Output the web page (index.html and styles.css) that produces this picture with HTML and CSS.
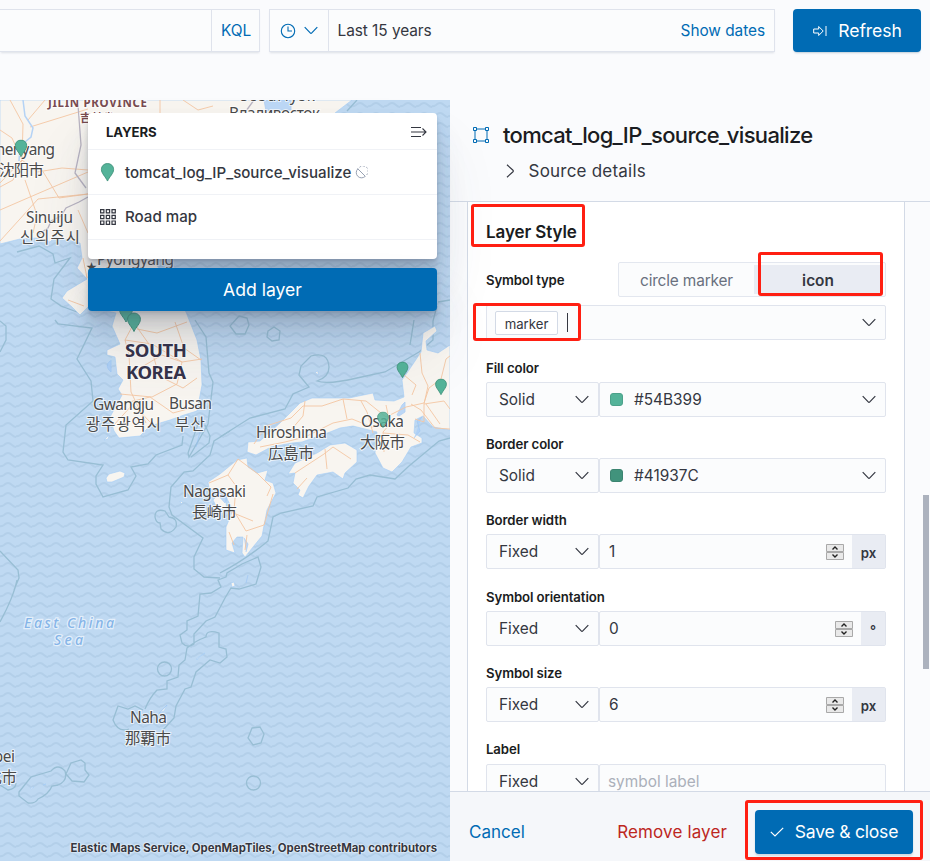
FILE: index.html
```html
<!DOCTYPE html>
<html lang="en">
<head>
<meta charset="utf-8">
<title>Maps</title>
<link rel="stylesheet" href="styles.css">
</head>
<body>
<svg width="0" height="0" class="defs">
  <symbol id="chev" viewBox="0 0 14 9"><path d="M.7 1.2 6.2 6.9q.8.8 1.6 0L13.3 1.2" fill="none" stroke="currentColor" stroke-width="1.2"/></symbol>
  <symbol id="pin" viewBox="0 0 14 20"><path d="M7 .6C3.300.6.6 3.300.6 6.800.6 11 5 14.500 7 19 9 14.500 13.400 11 13.400 6.800 13.400 3.300 10.700.6 7 .6Z" fill="#54b399" stroke="#41937c"/></symbol>
  <symbol id="spin" viewBox="0 0 18 16"><path d="M.5.5h17v7H.5zM.5 8.500h17v7H.5z" fill="#e9e9e9" stroke="#a9a9a9"/><path d="M6.500 5.500 9 3 11.500 5.500M6.500 10.500 9 13l2.500-2.500" fill="none" stroke="#222" stroke-width="1.400"/></symbol>
</svg>
<header class="topbar">
  <div class="query"><span class="kql">KQL</span></div>
  <div class="dates">
    <div class="quick">
      <svg class="clock" width="16" height="16" viewBox="0 0 16 16" fill="none" stroke="currentColor" stroke-width="1.100"><circle cx="8" cy="8" r="6.700"/><path d="M8 3.500V8h4"/></svg>
      <svg width="14" height="9"><use href="#chev"/></svg>
    </div>
    <span class="range">Last 15 years</span><a class="show">Show dates</a>
  </div>
  <button class="btn refresh"><svg width="14" height="12" viewBox="0 0 14 12" fill="none" stroke="currentColor"><path d="M.7 4h5V1.500L10.200 6l-4.500 4.500V8h-5zM13 1v10"/></svg><span>Refresh</span></button>
</header>
<main class="main">
  <section class="map">
    <svg class="canvas" width="450" height="761" viewBox="0 100 450 761">
      <defs><pattern id="wave" width="16" height="10" patternUnits="userSpaceOnUse"><path d="M-4 4q4 4 8 1 4-4 8 0 4 4 8 0" fill="none" stroke="#b3cfe9" stroke-width="1.800"/></pattern></defs>
      <rect y="100" width="450" height="761" fill="#bfd9f2"/>
      <rect y="100" width="450" height="761" fill="url(#wave)"/>
      <g class="bounds">
        <path d="M0 321l6 5v14l-6 12M0 551l18 19 1 8-5 12M17 580q-3 16-17 42M55 320l3 4 34 4-15 31 14 22 2 20-27 24-3 27 5 8 35 5-7 11v8l7 13 25-7 8-14-5-9 17-3 8-9 26-10 1-9"/>
        <path d="M195 320l11 17 3 36 4 9-5 42-19 33-1-4 11-32M205 425l5 11-1 7-18 14M0 254m17-2 22-6 14 8 2 9 15-5-16 21-3 20 10 7 16 6"/>
        <path d="M220 437l30-19 35-9 8-15 16-7-10-12 2-9 10-10q17-5 18 11 0 10-12 14 10 4 40-3l28-6 34-20 14-12v-19l4-15"/>
        <path d="M230 431l-16 10-4 14-17 16-9 1-13 15-2 20 3 8 31 23-9 19v12l10 8 16 1M220 573q25-13 48-32l5-24 8-4 32-7 4-9 31-9 8-9 14-4 25 4 14-13 30-25 11-3"/>
        <path d="M226 577l-8 3 3 7-10 6-11 1-2 22-11 5v9l-7 5 2 8q6 6 12 1v-10l12-13 9-4 10-19 6-10 8 1 17-5 5-17-3-10-16 7-15 9zM145 709q5-12 12-19l10-1v-8l11-4 1-12 6-5 2-12q8-7 19-11 0-8 13-4l0 14 7 2 1 8-7 6-10-3-14 12-5 15-6 2-9 17-2 12-11 12M143 710l-8-4-7 3-10-3-5 14q5 13 16 9"/>
        <circle cx="164.500" cy="669" r="7"/><circle cx="253.500" cy="783" r="7"/><path d="m252 728 8-1 4 7-3 9-8 2-5-7zM155 517q0-9 10-6l4 6q9 1 7 10-7 10-15 2l-1-6q-4 0-5-6M19 792l12-15 20-6q7-8 14 0 3 10-7 14l-6 1q-3 8-14 13-3 5-10 4l-9-7zM66 774l5-11 10-3 4 3v7l4 5-5 7-12-1z"/>
        <path d="m239 316 8 2 2 7-4 9-9 0-6-8zM268 331l6-4 6 4-1 9-7 1-5-4z"/><path d="M0 785l8 5q8-1 8-7M357 100 347 111M410 345l4-25M450 300l-12 2"/>
      </g>
      <g class="land">
        <path d="M0 100H352L335 113 300 155 155 240V262L186 312 197 340 201 360 202 385 197 411 184 415 170 420 150 426 140 436 119 438 114 431 110 417 122 395 118 389 123 380 117 374 115 357 107 355 107 350 120 344 112 326 116 313 88 307 80 315 72 307 62 298 67 291 87 279 77 268 82 258 80 243 55 237 50 242 37 238 20 239 0 244Z"/>
        <path d="M106 478 109 474 120 471 125 473 124 477 112 482 107 482ZM104 440l5-5-1 4z"/>
        <path d="M248 442 247 452 256 455 271 447 292 443 302 442 330 432 340 428 353 426 365 429 377 432 375 453 383 468 392 472 402 462 411 447 422 443V438L414 433 415 420 423 416 433 427 450 430V345L438 353 427 350 426 341 437 331 435 326 423 333 421 352 407 373 402 380 404 397 394 401 375 400 373 393 349 398 312 398 300 403 280 423 260 441Z"/>
        <path d="M288 474 295 463 317 453 330 445 345 443 357 450 357 462 345 473 343 479 333 472 317 475 309 486 303 498 298 495 300 490 293 483 295 473Z"/>
        <path d="M208 482 220 474 237 460 247 458 248 467 257 473 268 470 265 480 273 483 276 493 267 510 262 536 253 547 245 557 242 553 243 537 237 537 232 543 235 553 226 550 226 527 233 510 225 495 227 510 217 508 213 500 220 492 209 488Z"/>
        <path d="m315 372 3-1 0 4zM231 583l3-1 1 4-3 1zM197 658l8-5-7 5-1 2zM159 713l8-8-3 6zM30 788l4-1-2 2zM43 785l3-1zM180 501l3 1-2 2z"/>
      </g>
      <g class="shallow"><path d="M110 361q-6 5 1 11v-12M196 447l4-15M217 494l6-5 4 9-2 5zM244 538l4 6-2 8M414 438l6-7-3-10 5-4M397 415l5-10 3-3v10l-6 4zM156 717l11-12M246 583l2-8M264 100l27 0 0 10-25 1z"/></g>
      <g class="roads">
        <path d="M0 130l12 8 10 22 15 12 25-4 26 2M22 160 0 183M22 160l-9 20-13 7M25 180l12 35-4 18M42 170l17 28 29-4M10 100l13 24-1 36M30 127l58-18M0 210l30-13 58-25M45 100l-17 20M0 241l38-42 50-5M78 210l10 23M160 100v13M183 100l15 10 15-4M83 258l4 20M68 300l16 6"/>
        <path d="M134 323l-9 17 4 15 2 37 15 31M134 323l17 24 8 29 24 12 14-10M125 340l27 4 30 18 20-3M130 374l32-19 20 7-5 22-25 13-32-3M175 322l9 26 17 12M125 403l25-6 23 16 22-6M113 426l20-22 17 18M187 322l-30 11-20-4"/>
        <path d="M254 444l12-18 25-8 12-12 19 0 21-7 23 2 20 16 20-10 18-4 5-15 12-9 5-20 13-10M260 447l25-5 20-5 28-14 19-4 20 8 15-2M305 401l-2 15-12 14M343 399l4 20M361 401l6 11 6 21M386 405l4 19-7 8 1 20M404 375l12 10-4 10M420 353l2 20 6 13-4 18 20-3 6 8M383 433l25 2 12 7M424 404v18l-9-3M426 404l14 20M411 404l10 6 14 18 15 1"/>
        <path d="M295 473l29-19 9-7 18 12M325 449l2 20M297 489l10-11M209 483l19-8 10-16 20 15 13 13-4 9M228 475l8 11-2 25 12 20 18-6 9-31M231 512l22 9M229 532l5 13M247 535l-2 15"/>
      </g>
      <path class="border" d="M88 197l-9 5-13 6-5 8-10 5-3 7-9 6M78 105l3 40-6 28 11 15M254 100l-8 11"/>
      <path class="river" d="M23 100l2 16 8 12-2 9-11 9-1 15"/>
      <g class="labels">
        <text x="48" y="106.500" class="prov" textLength="99">JILIN PROVINCE</text><text x="80" y="122" class="prov">吉林省</text>
        <text x="238" y="101" textLength="77">Ussuriysk</text><text x="229" y="119" textLength="91">Владивосток</text>
        <text x="-12" y="154.500" textLength="67">Shenyang</text><text x="-1" y="175.500" textLength="45">沈阳市</text>
        <text x="26" y="222.500" textLength="47">Sinuiju</text><text x="20" y="243" textLength="60">신의주시</text>
        <text x="97" y="264.500" textLength="77">Pyongyang</text><text x="86" y="271" class="star">★</text>
        <g class="country"><text x="125" y="356.500" textLength="62">SOUTH</text><text x="126" y="378.500" textLength="60">KOREA</text></g>
        <text x="93" y="409.500" textLength="61">Gwangju</text><text x="86" y="430" textLength="75">광주광역시</text>
        <text x="169" y="409" textLength="43">Busan</text><text x="175" y="430" textLength="30">부산</text>
        <text x="256" y="437.500" textLength="71">Hiroshima</text><text x="268" y="459" textLength="46">広島市</text>
        <text x="361" y="426.500" textLength="43">Osaka</text><text x="360" y="448" textLength="45">大阪市</text>
        <text x="183" y="496.500" textLength="63">Nagasaki</text><text x="192" y="518" textLength="45">長崎市</text>
        <text x="130" y="722.500" textLength="37">Naha</text><text x="125" y="743.500" textLength="46">那覇市</text>
        <text x="-25" y="761.500" textLength="40">Taipei</text><text x="-29" y="782.500" textLength="46">台北市</text>
        <g class="sea"><text x="24" y="628" textLength="90">East China</text><text x="54" y="645" textLength="29">Sea</text></g>
      </g>
      <g class="pins"><use href="#pin" x="14.500" y="139.500" width="13" height="18"/><use href="#pin" x="119" y="303" width="14" height="20"/><use href="#pin" x="127" y="312" width="14" height="21"/><use href="#pin" x="396" y="361.500" width="13" height="17"/><use href="#pin" x="434.500" y="378.500" width="13" height="17"/><use href="#pin" x="376.500" y="411.500" width="13" height="17" opacity=".85"/></g>
    </svg>
    <div class="attribution">Elastic Maps Service, OpenMapTiles, OpenStreetMap contributors</div>
    <div class="control">
      <div class="layers">
        <div class="lhead"><b>LAYERS</b><svg width="16" height="12" viewBox="0 0 16 12" fill="none" stroke="#343741" stroke-width="1.100"><path d="M0 1.500h10M0 6h15M0 10.500h10M11.500 2.500 15 6l-3.500 3.500"/></svg></div>
        <div class="lrow"><svg width="15" height="19"><use href="#pin"/></svg><span class="src">tomcat_log_IP_source_visualize</span><svg class="off" width="13" height="13" viewBox="0 0 13 13" fill="none" stroke="#98a2b3"><path d="M2.500 2.500 10.500 10.500M3 2.700A5 5 0 0 0 10 10.500"/><path d="M4.500 1.300A5.200 5.200 0 0 1 11.500 9" stroke-dasharray="2 1.500"/></svg></div>
        <div class="lrow"><svg class="grid" width="16" height="16" viewBox="0 0 16 16" fill="none" stroke="#343741" stroke-width="1.200"><path d="M.6.6h3.300v3.300H.6zM6.300.6h3.300v3.300H6.300zM12 .6h3.300v3.300H12zM.6 6.300h3.300v3.300H.6zM6.300 6.300h3.300v3.300H6.300zM12 6.300h3.300v3.300H12zM.6 12h3.300v3.300H.6zM6.300 12h3.300v3.300H6.300zM12 12h3.300v3.300H12z"/></svg><span class="road">Road map</span></div>
      </div>
      <button class="btn add"><span>Add layer</span></button>
    </div>
  </section>
  <aside class="flyout">
    <div class="fhead">
      <div class="title"><svg width="16" height="16" viewBox="0 0 16 16" fill="none" stroke="#006bb4"><path d="M.5.500h3v3h-3zM12.500.5h3v3h-3zM.5 12.500h3v3h-3zM12.500 12.500h3v3h-3zM3.500 2h9M3.500 14h9M2 3.500v9M14 3.500v9"/></svg><h2><span>tomcat_log_IP_source_visualize</span></h2></div>
      <div class="details"><svg width="9" height="14" viewBox="0 0 9 14"><path d="M1 .8 7 6.300q.7.700 0 1.400L1 13.200" fill="none" stroke="#343741" stroke-width="1.200"/></svg><span>Source details</span></div>
    </div>
    <div class="fbody">
      <div class="card">
        <h3><span>Layer Style</span></h3>
        <div class="symtype"><label>Symbol type</label><div class="seg"><span class="circle">circle marker</span><b>icon</b></div></div>
        <div class="combo"><span class="pill">marker</span><i class="caret"></i><svg class="chev" width="14" height="9"><use href="#chev"/></svg></div>
        <div class="row"><label>Fill color</label><div class="ctl"><div class="sel">Solid<svg width="14" height="9"><use href="#chev"/></svg></div><div class="val"><i class="sw fill"></i>#54B399<svg class="chev" width="14" height="9"><use href="#chev"/></svg></div></div></div>
        <div class="row"><label>Border color</label><div class="ctl"><div class="sel">Solid<svg width="14" height="9"><use href="#chev"/></svg></div><div class="val"><i class="sw line"></i>#41937C<svg class="chev" width="14" height="9"><use href="#chev"/></svg></div></div></div>
        <div class="row tall"><label>Border width</label><div class="ctl"><div class="sel">Fixed<svg width="14" height="9"><use href="#chev"/></svg></div><div class="val num">1<svg class="spin" width="18" height="16"><use href="#spin"/></svg><b class="unit">px</b></div></div></div>
        <div class="row"><label>Symbol orientation</label><div class="ctl"><div class="sel">Fixed<svg width="14" height="9"><use href="#chev"/></svg></div><div class="val num">0<svg class="spin" width="18" height="16"><use href="#spin"/></svg><b class="unit deg">°</b></div></div></div>
        <div class="row"><label>Symbol size</label><div class="ctl"><div class="sel">Fixed<svg width="14" height="9"><use href="#chev"/></svg></div><div class="val num">6<svg class="spin" width="18" height="16"><use href="#spin"/></svg><b class="unit">px</b></div></div></div>
        <div class="row last"><label>Label</label><div class="ctl"><div class="sel">Fixed<svg width="14" height="9"><use href="#chev"/></svg></div><div class="val num ph">symbol label</div></div></div>
      </div>
    </div>
    <div class="ffoot"><a class="cancel">Cancel</a><a class="remove">Remove layer</a><button class="btn save"><svg width="14" height="10" viewBox="0 0 14 10"><path d="M.8 4.800 5 9 13.200.8" fill="none" stroke="currentColor" stroke-width="1.200"/></svg><span>Save &amp; close</span></button></div>
    <i class="thumb"></i>
  </aside>
</main>
<i class="mark m1"></i><i class="mark m2"></i><i class="mark m3"></i><i class="mark m4"></i>
</body>
</html>
```
FILE: styles.css
```css
* { box-sizing: border-box; }
body { margin: 0; width: 930px; height: 861px; overflow: hidden; position: relative; background: #fafbfd; color: #343741; font: 15.4px/20px Inter, "Noto Sans", sans-serif; }
svg { flex: none; display: block; }
.defs { position: absolute; }
.topbar { height: 100px; padding-top: 9px; display: flex; align-items: flex-start; }
.query, .dates { height: 43px; border: 1px solid #dfe3ec; background: #fbfcfd; box-shadow: 0 2px 2px -1px rgba(152,162,179,.3); display: flex; align-items: center; }
.query { width: 260px; border-left: 0; justify-content: flex-end; }
.kql { width: 48px; height: 41px; line-height: 42px; padding-left: 9px; border-left: 1px solid #dfe3ec; color: #006bb4; }
.dates { width: 506px; margin-left: 9px; }
.quick { width: 59px; height: 41px; border-right: 1px solid #dfe3ec; display: flex; align-items: center; gap: 8px; padding-left: 10px; color: #006bb4; }
.range { margin-left: 8.5px; letter-spacing: -.05px; }
.show { margin-left: auto; padding-right: 9px; color: #006bb4; letter-spacing: -.05px; }
.btn { border: 0; border-radius: 4px; background: #006bb4; color: #fff; font: 17.6px/24px Inter, sans-serif; display: flex; align-items: center; justify-content: center; height: 43px; padding: 0; }
.refresh { width: 128px; margin-left: 18px; gap: 11px; letter-spacing: -.1px; padding-left: 1px; box-shadow: 0 2px 2px -1px rgba(54,97,126,.3); }
.main { display: flex; height: 761px; }
.map { width: 450px; position: relative; z-index: 1; }
.bounds { fill: none; stroke: #98bed4; stroke-width: 1.3; }
.land { fill: #f8f5f0; stroke: #a4ccf7; stroke-width: .6; }
.shallow { fill: #a9cef8; stroke: #98c3f5; stroke-width: .8; opacity: .75; }
.roads { fill: none; stroke: #f4c6a3; stroke-width: .9; }
.border { fill: none; stroke: #b9b4c2; stroke-width: 1.3; }
.river { fill: none; stroke: #b5d3f5; stroke-width: 1.5; }
.labels { font: 15.4px "Noto Sans", "Noto Sans CJK JP", "Noto Sans CJK KR", sans-serif; fill: #4a4a4a; stroke: rgba(255,255,255,.7); stroke-width: 2px; paint-order: stroke; }
.prov { font-size: 11.5px; font-weight: 700; fill: #794b50; }
.star { font-size: 11px; }
.country { font-size: 18.5px; font-weight: 700; fill: #35324a; }
.sea { font-style: italic; font-size: 14px; font-weight: 500; fill: #86b5e8; stroke: rgba(235,244,253,.85); stroke-width: 2.4px; }
.attribution { position: absolute; right: 13px; bottom: 3px; font-size: 11.35px; font-weight: 700; white-space: nowrap; text-shadow: 0 0 2px #fff, 0 0 2px #fff; }
.control { position: absolute; left: 88px; top: 13px; width: 349px; }
.layers, .add { box-shadow: 0 40px 64px rgba(65,78,101,.1), 0 24px 32px rgba(65,78,101,.1), 0 16px 16px rgba(65,78,101,.1), 0 8px 8px rgba(65,78,101,.1), 0 4px 4px rgba(65,78,101,.1), 0 2px 2px rgba(65,78,101,.1); }
.layers { height: 146px; background: #fff; border-radius: 4px; }
.lhead { height: 37px; padding: 1px 10px 0 18px; display: flex; align-items: center; justify-content: space-between; font-size: 13.2px; color: #1a1c21; border-bottom: 1px solid #f0f2f6; }
.lhead b { font-weight: 700; letter-spacing: -.1px; }
.lrow { height: 45px; border-bottom: 1px solid #f0f2f6; display: flex; align-items: center; padding-left: 12px; font-weight: 500; font-size: 15.1px; }
.src { margin-left: 10px; padding-top: 1px; }
.road { margin-left: 9px; }
.off { margin: 1px 0 0 4px; }
.add { width: 349px; margin-top: 9px; }
.flyout { width: 480px; position: relative; }
.fhead { height: 102px; border-bottom: 1px solid #d3dae6; padding: 18px 0 0 22px; }
.title { display: flex; align-items: center; height: 34px; padding-left: 1px; }
h2 { margin: 0 0 0 14px; font-size: 22px; line-height: 34px; font-weight: 500; color: #1a1c21; letter-spacing: -.68px; }
.details { display: flex; align-items: center; height: 24px; margin: 7px 0 0 34px; font-size: 17px; gap: 13.5px; letter-spacing: .22px; }
.fbody { height: 589px; overflow: hidden; }
.card { margin-left: 17px; width: 438px; height: 620px; background: #fff; border: 1px solid #d3dae6; border-top: 0; padding: 18px 18px 0; }
h3 { margin: 0; font-size: 17px; line-height: 24px; font-weight: 600; color: #1a1c21; letter-spacing: -.1px; }
label { font-size: 13.2px; font-weight: 600; color: #1a1c21; letter-spacing: -.1px; }
.symtype { margin-top: 18px; height: 35px; display: flex; align-items: center; justify-content: space-between; }
.symtype label { letter-spacing: -.15px; }
.seg { width: 268px; height: 35px; border: 1px solid #e3e7ef; border-radius: 2px; background: #fbfcfd; display: flex; padding: 2px 4px 2px 0; line-height: 31px; }
.circle { width: 135px; text-align: center; color: #69707d; letter-spacing: -.15px; }
.seg b { flex: 1; background: #e9ecf3; text-align: center; font-weight: 600; padding-left: 1px; }
.combo { margin: 8px 0 18px; height: 35px; border: 1px solid #e0e4ed; background: #fbfcfd; border-radius: 2px; display: flex; align-items: center; padding-left: 8px; }
.pill { width: 63px; height: 24px; border: 1px solid #d3dae6; border-radius: 2px; background: #fff; text-align: center; font-size: 13.2px; line-height: 25px; margin-top: 1px; }
.caret { width: 1px; height: 19px; background: #343741; margin-left: 9px; }
.chev { margin: 0 9px 0 auto; }
.row { height: 76px; }
.row.tall { height: 77px; }
.row label { display: block; height: 20px; margin-bottom: 4px; }
.row.last label { margin-bottom: 5px; }
.ctl { display: flex; height: 35px; }
.sel, .val { border: 1px solid #e0e4ed; background: #fbfcfd; border-radius: 2px; display: flex; align-items: center; }
.sel { width: 113px; padding: 0 9px 0 12px; justify-content: space-between; }
.val { flex: 1; padding-left: 10px; }
.num { padding-left: 9px; }
.sw { width: 13px; height: 13px; border-radius: 3px; margin: -1px 11px 0 0; }
.sw.fill { background: #54b399; border: 1px solid #4ca18a; }
.sw.line { background: #41937c; border: 1px solid #3b8470; }
.spin { margin-left: auto; margin-right: 8px; }
.unit { width: 33px; height: 33px; background: #e9ecf3; text-align: center; font-size: 13.2px; font-weight: 600; line-height: 36px; }
.deg { width: 24px; }
.ph { color: #abb0ba; padding-left: 8px; }
.ffoot { height: 70px; background: #f5f7fa; border-top: 1px solid #d3dae6; display: flex; align-items: center; padding: 11px 17px 0 19px; font-size: 17px; }
.cancel { color: #006bb4; }
.remove { color: #bd271e; margin-left: auto; margin-right: 28px; letter-spacing: .13px; }
.save { width: 158px; height: 44px; gap: 11px; letter-spacing: -.25px; box-shadow: 0 2px 2px rgba(54,97,126,.2); }
.ffoot .cancel, .ffoot .remove { margin-top: -1px; }
.thumb { position: absolute; left: 473px; top: 395px; width: 6px; height: 174px; background: #acb2be; }
.mark { position: absolute; border: 3px solid #ff1f12; border-radius: 3px; z-index: 3; }
.m1 { left: 471px; top: 204px; width: 114px; height: 43px; }
.m2 { left: 758px; top: 252px; width: 125px; height: 44px; }
.m3 { left: 473px; top: 303px; width: 108px; height: 38px; }
.m4 { left: 745px; top: 800px; width: 178px; height: 60px; }
```
